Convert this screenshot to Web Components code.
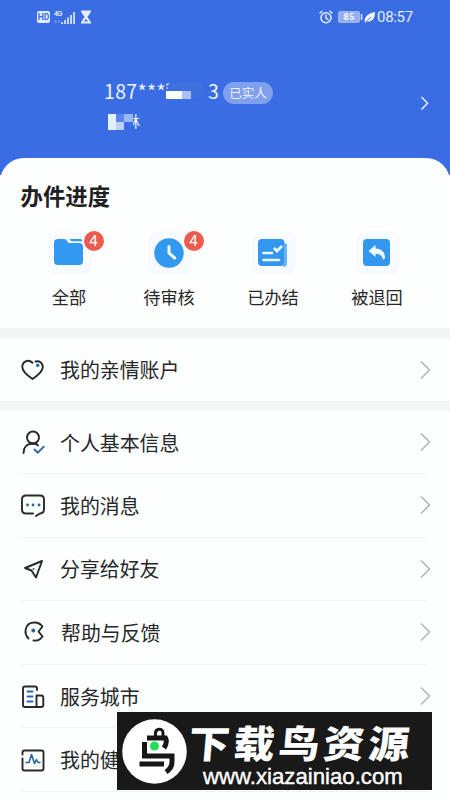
<!DOCTYPE html>
<html lang="zh-CN">
<head>
<meta charset="utf-8">
<title>办件进度</title>
<style>
html,body{margin:0;width:450px;height:800px;overflow:hidden;background:#fdfefe;font-family:"Noto Sans CJK SC",sans-serif;color:#262729}
</style>
</head>
<body>
<user-page></user-page>
<script>
const define = (name, html) => {
  const t = document.createElement('template');
  t.innerHTML = html;
  customElements.define(name, class extends HTMLElement {
    constructor() {
      super();
      this.attachShadow({mode: 'open'}).append(t.content.cloneNode(true));
    }
  });
};

define('status-bar', `
<style>
:host{display:flex;height:34px;padding:0 37px 0 37px;align-items:center;color:#e4edff;box-sizing:border-box}
svg{display:block;flex:none}
.time{font:15px/34px Roboto,sans-serif;margin-left:1px;width:36px;white-space:nowrap;letter-spacing:-.3px}
.sp{flex:1}
.hd{width:13px;height:12px;border-radius:2px;background:#e4edff;color:#3a6de2;font:bold 8.5px/12.5px Roboto,sans-serif;text-align:center}
.net{display:flex;margin-left:4px;width:22px;height:15px;position:relative}
.net b{font:bold 7px/8px "Liberation Sans",sans-serif;letter-spacing:-.8px}
.net svg{position:absolute;left:0;top:0}
.bat{width:20px;height:10px;border:1px solid #9db7f3;border-radius:2px;background:#94aef0;color:#f1f5ff;font:bold 9.5px/10.5px Roboto,sans-serif;text-align:center;letter-spacing:.4px;margin-left:5px}
</style>
<span class="hd">HD</span>
<span class="net"><b>4G</b><svg width="22" height="15" fill="#dce7ff"><path d="M7.200 12h1.700v2H7.200zM10.200 10h1.700v4h-1.700zM13.200 7.500h1.700V14h-1.700zM16.200 5h1.700v9h-1.700zM19.200 2h1.700v12h-1.700z"/><path d="M1 10h1.500v3H1zM4 10h1.500v3H4z" fill="#7398ec"/></svg></span>
<svg style="margin-left:5px" width="10" height="14" fill="#e4edff"><path d="M0 .5h10v2H9C9 5 6.500 6 6.500 7S9 9 9 11.500h1v2H0v-2h1C1 9 3.500 8 3.500 7S1 5 1 2.500H0z"/><path d="M3 11.500 5 9l2 2.500z" fill="#3a6de2"/></svg>
<span class="sp"></span>
<svg width="14" height="14" fill="none" stroke="#e4edff" stroke-width="1.500" stroke-linecap="round"><circle cx="7" cy="7.800" r="5"/><path d="M7 5v3l2 1.500M1 3l2-1.800M13 3l-2-1.800"/></svg>
<span class="bat">85</span>
<svg width="3" height="8"><path d="M.8 1h1.500v6H.8z" fill="#e4edff"/></svg>
<svg style="margin-left:1px" width="12" height="13"><path d="M1 12C0 7 2 3 11 1c0 7-3 10-8 9.500L1.500 12z" fill="#f0f5ff"/><path d="m1 12 6-6" stroke="#3a6de2" stroke-width=".8"/></svg>
<span class="time">08:57</span>`);

define('profile-header', `
<style>
:host{display:block;height:175px;margin-bottom:-17px;background:#3a6de4;color:#eef4ff}
.body{display:flex;padding:45px 20px 0 104px;justify-content:space-between}
.line{display:flex;height:24px;align-items:center;font-size:19.500px}
.num{width:62px;white-space:nowrap;line-height:24px;letter-spacing:.35px}
.mask{width:42px;height:16px;flex:none;display:block}
.end{width:11px;line-height:24px}
.tag{margin-left:4px;margin-top:3px;width:50px;height:22px;border-radius:11px;background:#809fed;font-size:12.500px;line-height:22px;text-align:center;white-space:nowrap}
.name{display:flex;align-items:center;height:20px;margin-top:8px;margin-left:3px}
.name svg{flex:none;position:relative}
.name span{font-size:15px;line-height:20px;margin-left:-8px}
</style>
<status-bar></status-bar>
<div class="body">
<div>
<div class="line"><span class="num">187***</span><svg class="mask" width="42" height="16"><path d="M0 0h36q4 8 0 14H0z" fill="#3e70df"/><path d="M0 2.500 3 0M0 5h2" stroke="#d5e1ff" stroke-width="1.200"/><path d="M0 8h16v8H0z" fill="#fbfdff"/><path d="M16 8h9v8h-9z" fill="#a9c0f8"/></svg><span class="end">3</span><span class="tag">已实人</span></div>
<div class="name"><svg width="26" height="18"><path d="M17 0h9v18h-9z" fill="#3a6de4"/><path d="M1 2h8v16H1z" fill="#e3effc"/><path d="M9 10h8v8H9z" fill="#bcd0fa"/><path d="M9 2h8v8H9z" fill="#5a84e9"/><path d="M17 2h9v8h-9z" fill="#9bb8f5"/></svg><span>林</span></div>
</div>
<svg style="margin-top:16px" width="10" height="16" fill="none" stroke="#eaf1ff" stroke-width="1.500"><path d="m1.500 2 6 6.300-6 6.300"/></svg>
</div>`);

define('progress-item', `
<style>
:host{display:flex;flex-direction:column;align-items:center;width:80px}
.icon{position:relative;width:44px;height:44px;border-radius:9px;background:#f7fafe;display:block;margin-left:2px}
::slotted(svg){display:block}
::slotted(b){position:absolute;left:35.500px;top:0;width:20px;height:20px;border-radius:50%;background:#eb5b4e;color:#fff;font:15px/21px Roboto,sans-serif;text-align:center}
.label{font-size:17.200px;line-height:26px;margin-top:9px;white-space:nowrap}
</style>
<span class="icon"><slot name="icon"></slot><slot name="badge"></slot></span>
<span class="label"><slot></slot></span>`);

define('progress-card', `
<style>
:host{display:block;height:170px;background:#fdfefe;border-radius:24px 24px 0 0;box-sizing:border-box;padding-top:20px}
h2{margin:0 0 0 20.500px;font-size:22.400px;line-height:34px;font-weight:700;color:#1f2022}
.grid{display:grid;grid-template-columns:100px 104px 104px 80px;margin:19px 0 0 29px}
</style>
<h2>办件进度</h2>
<div class="grid">
<progress-item><svg slot="icon" width="44" height="44"><path d="M6 12q0-4 4-4h6q2 0 3 1.700l1.500 2.300H31q4 0 4 4v14q0 4-4 4H10q-4 0-4-4z" fill="#3398f0"/><path d="M21.500 8H32q2 0 2.500 2.200h-11z" fill="#3398f0"/></svg><b slot="badge">4</b>全部</progress-item>
<progress-item><svg slot="icon" width="44" height="44"><circle cx="21" cy="22" r="14.700" fill="#3398f0"/><path d="M21 15.500V22l5.700 5" fill="none" stroke="#f2f9ff" stroke-width="3" stroke-linecap="round"/></svg><b slot="badge">4</b>待审核</progress-item>
<progress-item><svg slot="icon" width="44" height="44"><path d="M33.700 12.500v20q0 2.200-2.500 2.200" fill="none" stroke="#65b1f4" stroke-width="2.500"/><rect x="6" y="8" width="26.500" height="27" rx="4" fill="#3197ef"/><path d="M11.500 22h8.500M11.500 29h15.500" stroke="#eff8ff" stroke-width="2.600" stroke-linecap="round"/><path d="m22 17 3 3 5-5" fill="none" stroke="#eff8ff" stroke-width="2.800"/></svg>已办结</progress-item>
<progress-item><svg slot="icon" width="44" height="44"><rect x="7" y="8" width="27" height="27" rx="4" fill="#3197ef"/><path d="m12.500 20 7-6v3.500q9.500 0 9.500 10l-2 1.200q-1-6-7.500-6v3.200z" fill="#f3faff"/></svg>被退回</progress-item>
</div>`);

define('menu-row', `
<style>
:host{display:flex;height:63.600px;box-sizing:border-box;align-items:center;margin:0 22px 0 20px;border-bottom:1.500px solid #f1f2f2}
:host([plain]){border:0}
::slotted(svg){flex:none;display:block}
.text{flex:1;margin-left:14px;font-size:19.900px;line-height:30px;padding-top:1px;white-space:nowrap}
.go{flex:none;margin-right:-4px}
</style>
<slot name="icon"></slot><span class="text"><slot></slot></span>
<svg class="go" width="13" height="20" fill="none" stroke="#b2b3b4" stroke-width="1.500"><path d="m2 1.500 8.500 8.500L2 18.500"/></svg>`);

define('site-banner', `
<style>
:host{display:flex;position:absolute;left:117px;top:712px;width:315px;height:78px;background:#191919;color:#fff;box-sizing:border-box;padding:6px 0 0 5px}
.logo{flex:none}
.words{margin-left:1px}
.cn{display:block;font-weight:900;font-size:41px;line-height:46px;height:48px;margin-left:1px;letter-spacing:3.900px;white-space:nowrap;transform:skewX(-5deg) scaleY(.93)}
.url{display:block;font:22.200px/22px "Liberation Sans",sans-serif;margin-left:15px;-webkit-text-stroke:.4px #fff;white-space:nowrap}
</style>
<svg class="logo" width="65" height="66" fill="none" stroke="#161616" stroke-width="5"><circle cx="32.500" cy="33.500" r="32.300" fill="#fff" stroke="none"/><path d="M34 19q-2-6 2-7.500 5-1 5 3.500v3" stroke-width="3"/><path d="M25 20h20M43 19q3 5-1 11M22.500 24v14h27.500v6q0 6-6 10M17.500 46H42"/><circle cx="32.500" cy="28" r="4.500" fill="#22df5b" stroke="none"/></svg>
<div class="words"><span class="cn">下载鸟资源</span><span class="url">www.xiazainiao.com</span></div>`);

const icon = (body) => `<svg slot="icon" width="26" height="26" fill="none" stroke="#27292b" stroke-width="1.900" stroke-linecap="round" stroke-linejoin="round">${body}</svg>`;
define('user-page', `
<style>
:host{display:block;position:relative;width:450px;height:800px;overflow:hidden}
.band{height:10px;background:#f4f5f5}
.family{height:63px}
.first{height:63px}
.nudge{padding-left:1px}
</style>
<profile-header></profile-header>
<progress-card></progress-card>
<div class="band"></div>
<menu-row plain class="family">${icon('<path d="M12.500 5.800C8 1.500 2.300 5 2.300 10c0 5 6 9 10.200 12 4.500-3 10.300-7 10.300-12 0-4-3.500-6.700-7.300-5.500"/><circle cx="17.700" cy="8.300" r="1.700" fill="#2b63ae" stroke="none"/>')}我的亲情账户</menu-row>
<div class="band"></div>
<menu-row class="first">${icon('<circle cx="13" cy="8.500" r="6"/><path d="M3.500 24c0-5 3-9.300 9-9.500 2.500 0 4.500.7 5.500 2"/><path d="m14.500 20.500 3.300 3.200 6-6" stroke="#2b63ae"/>')}个人基本信息</menu-row>
<menu-row>${icon('<path d="M13 21.500H6q-4 0-4-4V7.500q0-4 4-4h14q4 0 4 4v10q0 3.500-4 4l-4 2.500"/><path d="M7.500 13h.1M13 13h.1M19 13h.1" stroke="#2b63ae" stroke-width="2.800"/>')}我的消息</menu-row>
<menu-row>${icon('<path d="m22 5-17 7 6.500 2.500 4.500 7z"/><path d="M13.500 13h.1" stroke="#2b63ae" stroke-width="2"/>')}分享给好友</menu-row>
<menu-row class="nudge">${icon('<path d="M7.500 19.500C2.500 14.500 3.500 3.500 13.500 3.500q5 0 8 4l-4 5 4 5q-3.500 5-9 4"/><circle cx="12.300" cy="11.500" r="2" fill="#2b63ae" stroke="none"/>')}帮助与反馈</menu-row>
<menu-row>${icon('<path d="M16.500 24H5q-2 0-2-2V5.500q0-2 2-2h10q2 0 2 2V7M16.500 24V12.500H21q2.300 0 2.300 2V22q0 2-2 2z"/><path d="M7.500 8.500h5M7.500 13.500h5M7.500 18.500h5" stroke="#2b63ae"/>')}服务城市</menu-row>
<menu-row>${icon('<path d="M2.500 7.500v-2q0-2 2-2h17q2 0 2 2v16q0 2-2 2h-17q-2 0-2-2v-10"/><path d="M6 15.500h3l2.500-8 3 9 2-4 1.500 3H20" stroke="#2b63ae" stroke-width="1.600"/>')}我的健康信息</menu-row>
<site-banner></site-banner>`);
</script>
</body>
</html>
